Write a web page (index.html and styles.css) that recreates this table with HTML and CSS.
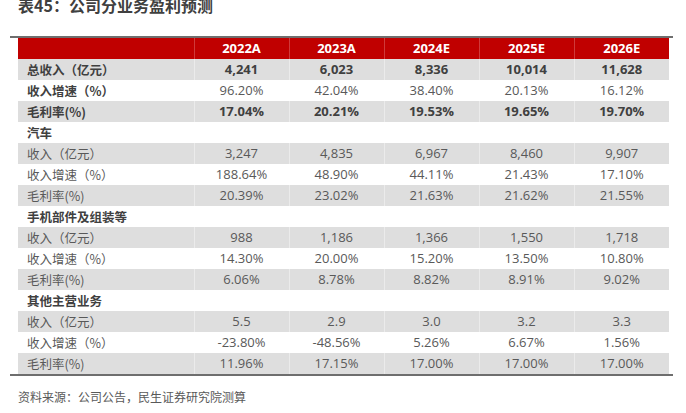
FILE: index.html
```html
<!DOCTYPE html>
<html lang="zh">
<head>
<meta charset="utf-8">
<title>表45：公司分业务盈利预测</title>
<link rel="stylesheet" href="styles.css">
</head>
<body>
<div class="page">
  <h1 class="title">表45：公司分业务盈利预测</h1>
  <div class="sheet">
    <div class="rule"></div>
    <table class="data">
      <colgroup>
        <col class="c-label"><col class="c-num"><col class="c-num"><col class="c-num"><col class="c-num"><col class="c-num">
      </colgroup>
      <thead>
        <tr><th></th><th>2022A</th><th>2023A</th><th>2024E</th><th>2025E</th><th>2026E</th></tr>
      </thead>
      <tbody>
        <tr class="shade strong"><td>总收入（亿元）</td><td>4,241</td><td>6,023</td><td>8,336</td><td>10,014</td><td>11,628</td></tr>
        <tr class="strong-label"><td>收入增速（%）</td><td>96.20%</td><td>42.04%</td><td>38.40%</td><td>20.13%</td><td>16.12%</td></tr>
        <tr class="shade strong"><td>毛利率(%)</td><td>17.04%</td><td>20.21%</td><td>19.53%</td><td>19.65%</td><td>19.70%</td></tr>
        <tr class="section"><td>汽车</td><td></td><td></td><td></td><td></td><td></td></tr>
        <tr class="shade"><td>收入（亿元）</td><td>3,247</td><td>4,835</td><td>6,967</td><td>8,460</td><td>9,907</td></tr>
        <tr><td>收入增速（%）</td><td>188.64%</td><td>48.90%</td><td>44.11%</td><td>21.43%</td><td>17.10%</td></tr>
        <tr class="shade"><td>毛利率(%)</td><td>20.39%</td><td>23.02%</td><td>21.63%</td><td>21.62%</td><td>21.55%</td></tr>
        <tr class="section"><td>手机部件及组装等</td><td></td><td></td><td></td><td></td><td></td></tr>
        <tr class="shade"><td>收入（亿元）</td><td>988</td><td>1,186</td><td>1,366</td><td>1,550</td><td>1,718</td></tr>
        <tr><td>收入增速（%）</td><td>14.30%</td><td>20.00%</td><td>15.20%</td><td>13.50%</td><td>10.80%</td></tr>
        <tr class="shade"><td>毛利率(%)</td><td>6.06%</td><td>8.78%</td><td>8.82%</td><td>8.91%</td><td>9.02%</td></tr>
        <tr class="section"><td>其他主营业务</td><td></td><td></td><td></td><td></td><td></td></tr>
        <tr class="shade"><td>收入（亿元）</td><td>5.5</td><td>2.9</td><td>3.0</td><td>3.2</td><td>3.3</td></tr>
        <tr><td>收入增速（%）</td><td>-23.80%</td><td>-48.56%</td><td>5.26%</td><td>6.67%</td><td>1.56%</td></tr>
        <tr class="shade"><td>毛利率(%)</td><td>11.96%</td><td>17.15%</td><td>17.00%</td><td>17.00%</td><td>17.00%</td></tr>
      </tbody>
    </table>
    <div class="rule"></div>
  </div>
  <p class="source">资料来源：公司公告，民生证券研究院测算</p>
</div>
</body>
</html>
```

FILE: styles.css
```css
html, body {
  margin: 0;
  padding: 0;
  background: #ffffff;
}

.page {
  width: 686px;
  height: 413px;
  overflow: hidden;
  font-family: "Open Sans", "Noto Sans CJK SC", sans-serif;
  color: #595959;
}

.title {
  margin: -6px 0 0 18px;
  height: 42px;
  font-family: "Noto Sans CJK SC", sans-serif;
  font-size: 16px;
  line-height: 22px;
  font-weight: 700;
  color: #404040;
}

.sheet {
  margin-left: 10px;
  width: 663px;
}

.rule {
  height: 2px;
  background: #6e6e6e;
}

.data {
  margin-left: 8px;
  width: 651px;
  border-collapse: collapse;
  table-layout: fixed;
  font-size: 13px;
}

.c-label { width: 176px; }
.c-num { width: 95px; }

.data th,
.data td {
  padding: 0;
  text-align: center;
  white-space: nowrap;
}

.data th {
  height: 21px;
  background: #c00000;
  color: #ffffff;
  font-weight: 700;
  border-left: 1px solid #cf3a3a;
  line-height: 21px;
}

.data th:first-child { border-left: none; }

.data td {
  height: 21px;
  line-height: 21px;
  border-left: 1px solid transparent;
}

.data td:first-child {
  text-align: left;
  padding-left: 9px;
  border-left: none;
  font-family: "Noto Sans CJK SC", sans-serif;
  font-size: 12.5px;
}

.shade td {
  background: #dedede;
  border-left-color: #ebebeb;
}

.shade td:first-child { border-left: none; }

.strong td {
  font-weight: 700;
  color: #404040;
}

.strong-label td:first-child,
.section td:first-child {
  font-weight: 700;
  color: #404040;
}

.source {
  margin: 13px 0 0 18px;
  font-family: "Noto Sans CJK SC", sans-serif;
  font-size: 12px;
  line-height: 16px;
  color: #595959;
}
```
